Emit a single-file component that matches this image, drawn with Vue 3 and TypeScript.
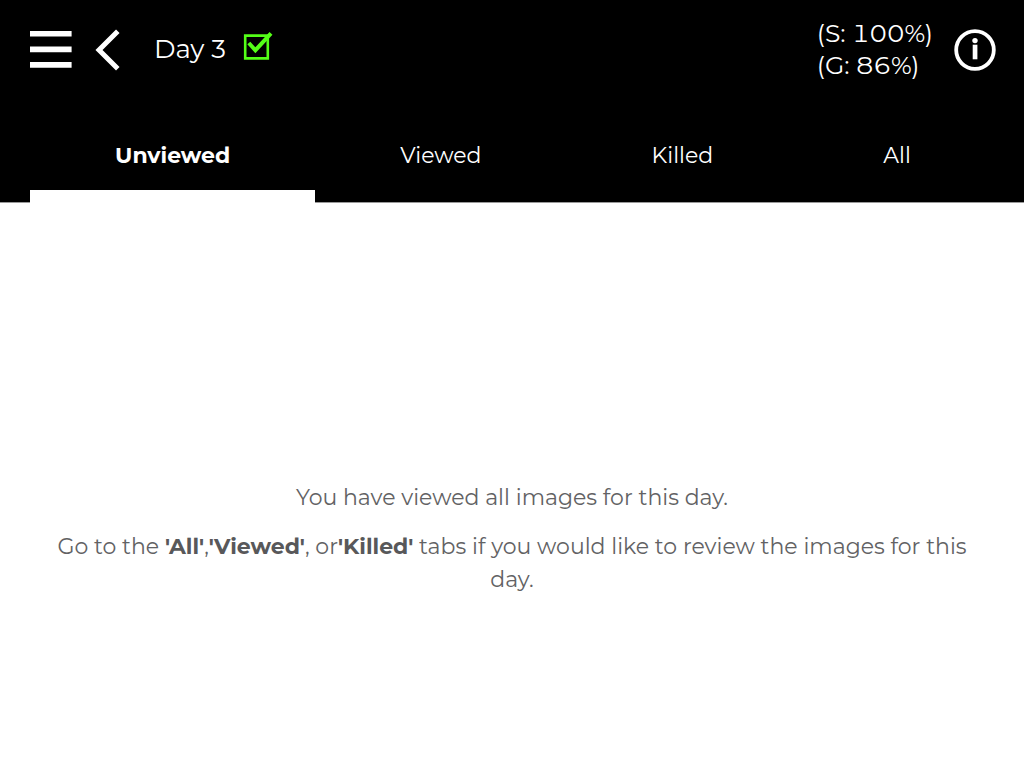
<script setup lang="ts">
import { ref } from 'vue'

const tabs: string[] = ['Unviewed', 'Viewed', 'Killed', 'All']
const active = ref<string>('Unviewed')
</script>

<template>
  <div class="page">
    <header class="header">
      <div class="bar">
        <button class="icon-button" type="button" aria-label="Menu">
          <svg width="42" height="38" viewBox="0 0 42 38" fill="#fff">
            <path d="M0 0h41.6v5.6H0zM0 15.6h41.6v5.6H0zM0 31.1h41.6v5.6H0z" />
          </svg>
        </button>
        <button class="icon-button back" type="button" aria-label="Back">
          <svg width="26" height="42" viewBox="0 0 26 42" fill="none" stroke="#fff" stroke-width="5">
            <path d="M22.8 2.2L4 21l18.8 18.8" />
          </svg>
        </button>
        <h1 class="title">Day 3</h1>
        <svg class="check" width="30" height="30" viewBox="0 0 30 30" fill="none" stroke="#54ff17" role="img" aria-label="Complete">
          <path d="M2.2 4.6h22.6v22.8H2.2z" stroke-width="2.6" />
          <path d="M5.8 12l6.6 7.2L28 2.4" stroke-width="4" />
        </svg>
        <div class="stats">
          <div>(S: 100%)</div>
          <div>(G: 86%)</div>
        </div>
        <button class="icon-button" type="button" aria-label="Information">
          <svg width="42" height="42" viewBox="0 0 42 42">
            <circle cx="21" cy="21" r="18.8" fill="none" stroke="#fff" stroke-width="3.8" />
            <circle cx="21" cy="11.6" r="2.7" fill="#fff" />
            <path d="M18.7 15.7h4.7v14.6h-4.7z" fill="#fff" />
          </svg>
        </button>
      </div>
      <nav class="tabs">
        <button
          v-for="tab in tabs"
          :key="tab"
          type="button"
          class="tab"
          :class="{ active: tab === active }"
          @click="active = tab"
        >{{ tab }}</button>
      </nav>
    </header>
    <main class="content">
      <p>You have viewed all images for this day.</p>
      <p>Go to the <strong>'All'</strong>,<strong>'Viewed'</strong>, or<strong>'Killed'</strong> tabs if you would like to review the images for this day.</p>
    </main>
  </div>
</template>

<style>
body {
  margin: 0;
  background: #fff;
}
</style>

<style scoped>
.page {
  display: flex;
  flex-direction: column;
  min-height: 100vh;
  font-family: Montserrat, Inter, "Liberation Sans", sans-serif;
  font-size: 22px;
  font-weight: 400;
}
.header {
  border-bottom: 1px solid #999;
  background: #000;
  color: #fff;
}
.bar {
  display: flex;
  align-items: center;
  height: 99px;
  padding: 0 28px 0 30px;
}
.icon-button {
  display: flex;
  padding: 0;
  border: 0;
  background: none;
  cursor: pointer;
}
.back {
  margin-left: 23px;
}
.title {
  margin: 0 0 2px 33px;
  font-size: 26px;
  font-weight: 400;
  line-height: 32px;
}
.check {
  margin: 0 auto 8px 17px;
}
.stats {
  margin: 0 21px 2px 0;
  font-size: 25px;
  font-variant-numeric: tabular-nums;
  line-height: 32px;
}
.tabs {
  display: flex;
  height: 104px;
  margin-bottom: -1px;
  padding: 0 28px 0 30px;
}
.tab {
  flex: 1 1 auto;
  padding: 21px 0 0;
  border: 0;
  border-bottom: 13px solid transparent;
  background: none;
  color: inherit;
  font: inherit;
  cursor: pointer;
}
.tab.active {
  border-bottom-color: #fff;
  font-weight: 700;
}
.content {
  display: flex;
  flex: 1;
  flex-direction: column;
  gap: 16px;
  padding: 278px 50px 24px;
  color: #626264;
  line-height: 33px;
  text-align: center;
}
.content p {
  margin: 0;
}
.content strong {
  color: #58585a;
  font-weight: 700;
}
</style>
